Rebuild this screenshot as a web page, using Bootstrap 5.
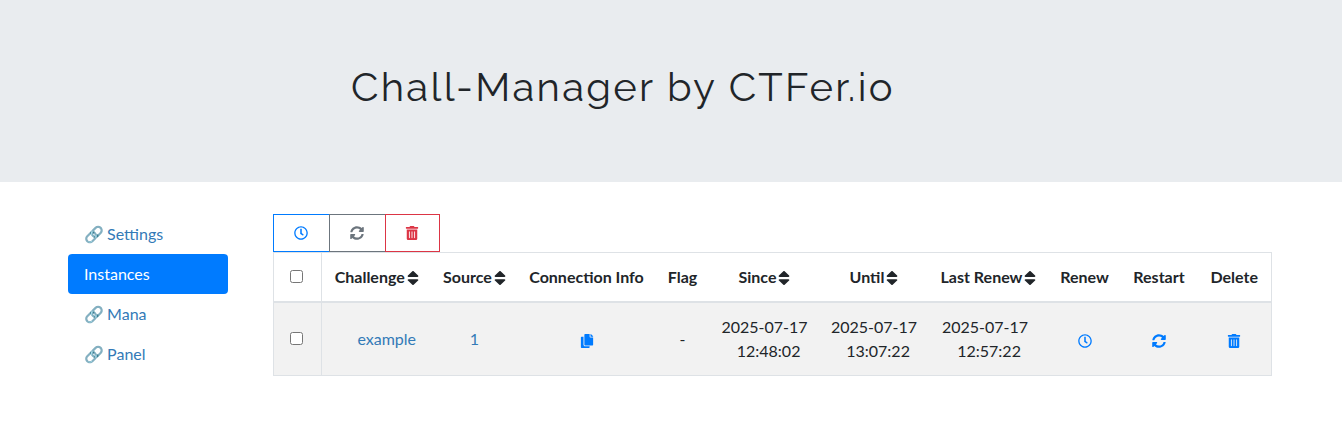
<!DOCTYPE html>
<html lang="en">
<head>
  <meta charset="UTF-8">
  <title>Instances</title>
  <link href="https://cdn.jsdelivr.net/npm/bootstrap@5.3.0/dist/css/bootstrap.min.css" rel="stylesheet">
  <style>
    body { font-family: Lato, sans-serif; font-size: 16px; color: #212529; }
    a { text-decoration: none; color: #337ab7; }
    .hero-band { background: #e9ecef; height: 182px; }
    .hero-title { font-family: Raleway, Lato, sans-serif; font-size: 40px; font-weight: 400; letter-spacing: 2.3px; padding-left: 351px; line-height: 174px; margin: 0; }
    .page-body { padding: 32px 70px 0 68px; gap: 45px; }
    .side-menu { width: 160px; }
    .side-menu a { display: block; height: 40px; line-height: 40px; padding-left: 16px; border-radius: 4px; word-spacing: -1px; }
    .side-menu a.current { background: #007bff; color: #fff; }
    .main-area { width: 999px; }
    .tool-btn { width: 57px; height: 38px; background: #fff; border: 1px solid #6c757d; display: flex; align-items: center; justify-content: center; padding: 0 2px 0 0; margin-right: -1px; }
    .tool-btn.b-blue { border-color: #007bff; }
    .tool-btn.b-red { border-color: #dc3545; width: 55px; position: relative; }
    .tool-btn svg, .row-icon { width: 14px; height: 14px; }
    .sort-ic { width: 12px; height: 18px; vertical-align: -4px; margin-left: 2px; }
    table.inst { width: 998px; table-layout: fixed; border-collapse: collapse; font-size: 16px; }
    table.inst th, table.inst td { border-top: 1px solid #dee2e6; border-bottom: 1px solid #dee2e6; text-align: center; vertical-align: middle; padding: 0; }
    table.inst th { height: 49px; font-weight: 700; border-bottom-width: 2px; white-space: nowrap; }
    table.inst td { height: 74px; background: #f2f2f2; line-height: 24px; }
    table.inst .edge-l { border-left: 1px solid #dee2e6; border-right: 1px solid #dee2e6; padding-right: 3px; }
    table.inst .edge-r { border-right: 1px solid #dee2e6; }
    table.inst input { display: block; margin: 0 auto; width: 13px; height: 13px; }
    table.inst td.shift-link { padding-left: 20px; }
    table.inst td.shift-date { padding-right: 7px; }
    .w-a { width: 48px; } .w-b { width: 110px; } .w-c { width: 86px; } .w-d { width: 138px; }
    .w-e { width: 54px; } .w-f { width: 110px; } .w-g { width: 109px; } .w-h { width: 120px; }
    .w-i { width: 72px; } .w-j { width: 77px; } .w-k { width: 74px; }
  </style>
</head>
<body>
  <svg width="0" height="0" class="d-block">
    <defs>
      <symbol id="ic-clock" viewBox="0 0 512 512"><path d="M256 8C119 8 8 119 8 256s111 248 248 248 248-111 248-248S393 8 256 8zm0 448c-110.500 0-200-89.500-200-200S145.500 56 256 56s200 89.500 200 200-89.500 200-200 200zm61.800-104.400l-84.900-61.700c-3.100-2.300-4.900-5.900-4.900-9.700V116c0-6.600 5.400-12 12-12h32c6.600 0 12 5.400 12 12v141.700l66.800 48.600c5.400 3.900 6.500 11.400 2.600 16.800L334.600 349c-3.900 5.300-11.400 6.500-16.800 2.600z"/></symbol>
      <symbol id="ic-sync" viewBox="0 0 512 512"><path d="M370.720 133.280C339.458 104.008 298.888 87.962 255.848 88c-77.458.068-144.328 53.178-162.791 126.850-1.344 5.363-6.122 9.150-11.651 9.150H24.103c-7.498 0-13.194-6.807-11.807-14.176C33.933 94.924 134.813 8 256 8c66.448 0 126.791 26.136 171.315 68.685L463.030 40.970C478.149 25.851 504 36.559 504 57.941V192c0 13.255-10.745 24-24 24H345.941c-21.382 0-32.090-25.851-16.971-40.971l41.750-41.749zM32 296h134.059c21.382 0 32.090 25.851 16.971 40.971l-41.750 41.750c31.262 29.273 71.835 45.319 114.876 45.280 77.418-.07 144.315-53.144 162.787-126.849 1.344-5.363 6.122-9.150 11.651-9.150h57.304c7.498 0 13.194 6.807 11.807 14.176C478.067 417.076 377.187 504 256 504c-66.448 0-126.791-26.136-171.315-68.685L48.970 471.030C33.851 486.149 8 475.441 8 454.059V320c0-13.255 10.745-24 24-24z"/></symbol>
      <symbol id="ic-trash" viewBox="0 0 448 512"><path d="M32 464a48 48 0 0 0 48 48h288a48 48 0 0 0 48-48V128H32zm272-256a16 16 0 0 1 32 0v224a16 16 0 0 1-32 0zm-96 0a16 16 0 0 1 32 0v224a16 16 0 0 1-32 0zm-96 0a16 16 0 0 1 32 0v224a16 16 0 0 1-32 0zM432 32H312l-9.400-18.700A24 24 0 0 0 281.100 0H166.800a23.720 23.720 0 0 0-21.400 13.300L136 32H16A16 16 0 0 0 0 48v32a16 16 0 0 0 16 16h416a16 16 0 0 0 16-16V48a16 16 0 0 0-16-16z"/></symbol>
      <symbol id="ic-copy" viewBox="0 0 448 512"><path d="M320 448v40c0 13.255-10.745 24-24 24H24c-13.255 0-24-10.745-24-24V120c0-13.255 10.745-24 24-24h72v296c0 30.879 25.121 56 56 56h168zm0-344V0H152c-13.255 0-24 10.745-24 24v368c0 13.255 10.745 24 24 24h272c13.255 0 24-10.745 24-24V128H344c-13.200 0-24-10.800-24-24zm120.971-31.029L375.029 7.029A24 24 0 0 0 358.059 0H352v96h96v-6.059a24 24 0 0 0-7.029-16.970z"/></symbol>
      <symbol id="ic-sort" viewBox="0 0 320 512" preserveAspectRatio="none"><path d="M41 288h238c21.400 0 32.100 25.900 17 41L177 448c-9.400 9.400-24.600 9.400-33.900 0L24 329c-15.100-15.100-4.400-41 17-41zm255-105L177 64c-9.400-9.400-24.600-9.400-33.900 0L24 183c-15.100 15.100-4.400 41 17 41h238c21.400 0 32.100-25.900 17-41z"/></symbol>
    </defs>
  </svg>
  <div class="hero-band"><h1 class="hero-title">Chall-Manager by CTFer.io</h1></div>
  <div class="d-flex page-body">
    <div class="side-menu">
      <a href="#">🔗 Settings</a>
      <a href="#" class="current">Instances</a>
      <a href="#">🔗 Mana</a>
      <a href="#">🔗 Panel</a>
    </div>
    <div class="main-area">
      <div class="d-flex">
        <button class="tool-btn b-blue"><svg fill="#007bff"><use href="#ic-clock"/></svg></button>
        <button class="tool-btn"><svg fill="#6c757d"><use href="#ic-sync"/></svg></button>
        <button class="tool-btn b-red"><svg fill="#dc3545"><use href="#ic-trash"/></svg></button>
      </div>
      <table class="inst">
        <thead>
          <tr>
            <th class="edge-l w-a"><input type="checkbox"></th>
            <th class="w-b">Challenge<svg class="sort-ic" fill="#212529"><use href="#ic-sort"/></svg></th>
            <th class="w-c">Source<svg class="sort-ic" fill="#212529"><use href="#ic-sort"/></svg></th>
            <th class="w-d">Connection Info</th>
            <th class="w-e">Flag</th>
            <th class="w-f">Since<svg class="sort-ic" fill="#212529"><use href="#ic-sort"/></svg></th>
            <th class="w-g">Until<svg class="sort-ic" fill="#212529"><use href="#ic-sort"/></svg></th>
            <th class="w-h">Last Renew<svg class="sort-ic" fill="#212529"><use href="#ic-sort"/></svg></th>
            <th class="w-i">Renew</th>
            <th class="w-j">Restart</th>
            <th class="edge-r w-k">Delete</th>
          </tr>
        </thead>
        <tbody>
          <tr>
            <td class="edge-l"><input type="checkbox"></td>
            <td class="shift-link"><a href="#">example</a></td>
            <td><a href="#">1</a></td>
            <td><svg class="row-icon" fill="#007bff"><use href="#ic-copy"/></svg></td>
            <td>-</td>
            <td>2025-07-17<br>&nbsp;&nbsp;12:48:02</td>
            <td>2025-07-17<br>&nbsp;&nbsp;13:07:22</td>
            <td class="shift-date">2025-07-17<br>&nbsp;&nbsp;12:57:22</td>
            <td><svg class="row-icon" fill="#007bff"><use href="#ic-clock"/></svg></td>
            <td><svg class="row-icon" fill="#007bff"><use href="#ic-sync"/></svg></td>
            <td class="edge-r"><svg class="row-icon" fill="#007bff"><use href="#ic-trash"/></svg></td>
          </tr>
        </tbody>
      </table>
    </div>
  </div>
</body>
</html>
